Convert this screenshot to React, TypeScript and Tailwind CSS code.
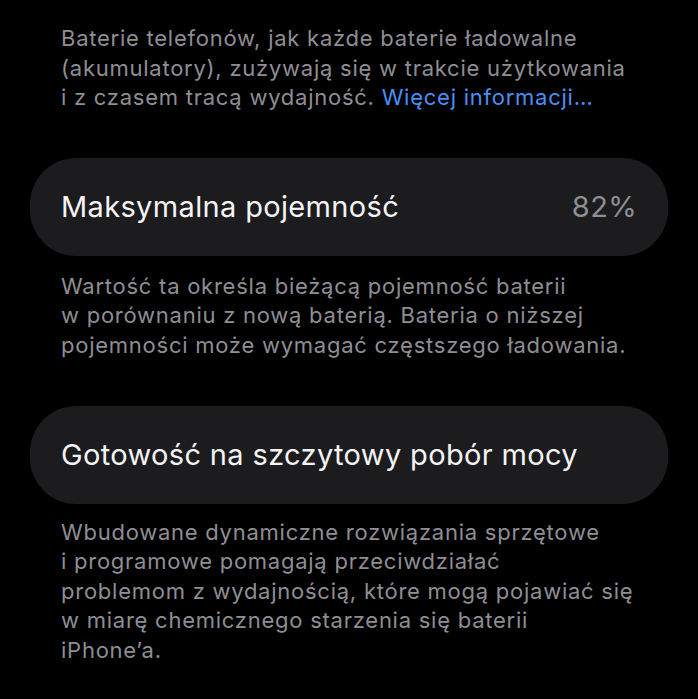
import React from 'react';

const font = { fontFamily: 'Inter, Roboto, "Noto Sans", sans-serif' };

function Note({ lines, className = '' }: { lines: React.ReactNode[]; className?: string }) {
  return (
    <p className={`px-[61px] text-[22px] leading-[29.6px] tracking-[0.75px] text-[#8e8e93] ${className}`}>
      {lines.map((l, i) => (
        <span key={i} className="block whitespace-nowrap">
          {l}
        </span>
      ))}
    </p>
  );
}

function Row({ title, value }: { title: string; value?: string }) {
  return (
    <div className="mx-[30px] flex h-[98px] items-center justify-between rounded-[46px] bg-[#1c1c1e] px-[31px]">
      <span className="text-[29px] tracking-[0.35px] text-[#f4f4f6]">{title}</span>
      {value && <span className="text-[29px] tracking-[0.35px] text-[#8e8e93]">{value}</span>}
    </div>
  );
}

export default function App() {
  return (
    <div className="h-[699px] w-[698px] overflow-hidden bg-black" style={font}>
      <Note
        className="pt-[24px]"
        lines={[
          'Baterie telefonów, jak każde baterie ładowalne',
          '(akumulatory), zużywają się w trakcie użytkowania',
          <>
            i z czasem tracą wydajność. <span className="text-[#4a8ff5]">Więcej informacji…</span>
          </>,
        ]}
      />
      <div className="mt-[45px]">
        <Row title="Maksymalna pojemność" value="82%" />
      </div>
      <Note
        className="mt-[16px]"
        lines={[
          'Wartość ta określa bieżącą pojemność baterii',
          'w porównaniu z nową baterią. Bateria o niższej',
          'pojemności może wymagać częstszego ładowania.',
        ]}
      />
      <div className="mt-[45px]">
        <Row title="Gotowość na szczytowy pobór mocy" />
      </div>
      <Note
        className="mt-[14px]"
        lines={[
          'Wbudowane dynamiczne rozwiązania sprzętowe',
          'i programowe pomagają przeciwdziałać',
          'problemom z wydajnością, które mogą pojawiać się',
          'w miarę chemicznego starzenia się baterii',
          'iPhone’a.',
        ]}
      />
    </div>
  );
}
